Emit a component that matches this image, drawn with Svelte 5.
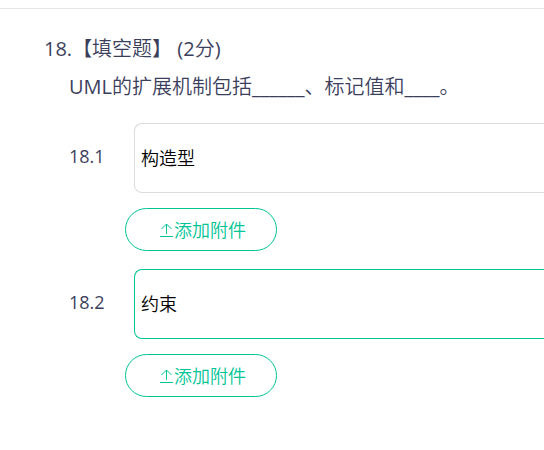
<script>
  let answers = $state([
    { id: '18.1', value: '构造型', active: false },
    { id: '18.2', value: '约束', active: true },
  ]);
</script>

<main>
  <section class="question">
    <h1>18.【填空题】 (2分)</h1>
    <p>UML的扩展机制包括______、标记值和____。</p>
    {#each answers as answer (answer.id)}
      <div class="answer">
        <div class="row">
          <label for={`answer-${answer.id}`}>{answer.id}</label>
          <input id={`answer-${answer.id}`} type="text" class:active={answer.active} bind:value={answer.value} />
        </div>
        <button type="button">
          <svg viewBox="0 0 16 16" aria-hidden="true">
            <path d="M2 14.5H15M8.5 12V2M3.5 7L8.5 2L13.5 7" />
          </svg>
          <span>添加附件</span>
        </button>
      </div>
    {/each}
  </section>
</main>

<style>
  :global(body) {
    margin: 0;
    background: #fff;
  }
  main {
    padding-top: 8px;
    font-family: "Open Sans", "Noto Sans CJK SC DemiLight", "Noto Sans CJK SC", sans-serif;
    font-weight: 400;
    color: #3c3f5c;
  }
  .question {
    border-top: 1px solid #e4e4e4;
    padding: 21px 0 20px 44px;
  }
  h1,
  p {
    margin: 0;
    font-size: 20px;
    font-weight: inherit;
    line-height: 38px;
    white-space: nowrap;
  }
  p {
    padding-left: 25px;
    line-height: 37px;
  }
  .answer {
    padding-top: 18px;
  }
  .row {
    display: flex;
    align-items: center;
  }
  label {
    flex: none;
    width: 65px;
    padding: 0 0 4px 25px;
    font-size: 18px;
    line-height: 24px;
  }
  input {
    flex: 1;
    min-width: 0;
    height: 70px;
    box-sizing: border-box;
    padding: 0 6px 2px;
    border: 1px solid #dcdcdc;
    border-right: 0;
    border-radius: 8px 0 0 8px;
    background: #fff;
    color: #000;
    font-family: inherit;
    font-weight: inherit;
    font-size: 18px;
    outline: none;
  }
  input.active,
  input:focus {
    border-color: #00c495;
  }
  button {
    display: flex;
    align-items: center;
    justify-content: center;
    width: 152px;
    height: 43px;
    margin: 15px 0 0 81px;
    padding: 0 0 0 2px;
    border: 1px solid #00c495;
    border-radius: 22px;
    background: #fff;
    color: #00c495;
    font-family: inherit;
    font-weight: inherit;
    font-size: 18px;
    line-height: 24px;
    cursor: pointer;
  }
  svg {
    width: 16px;
    height: 16px;
    fill: none;
    stroke: currentColor;
    stroke-width: 1;
  }
</style>
